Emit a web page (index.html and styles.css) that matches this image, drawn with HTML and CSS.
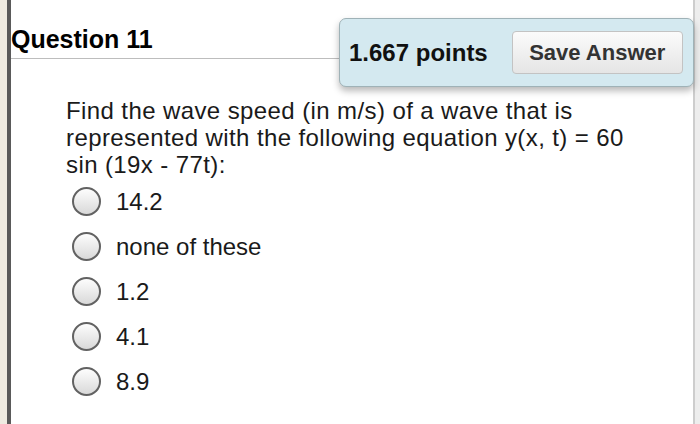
FILE: index.html
```html
<!DOCTYPE html>
<html lang="en">
<head>
  <meta charset="UTF-8">
  <meta name="viewport" content="width=device-width, initial-scale=1.0">
  <title>Question 11</title>
  <link rel="stylesheet" href="styles.css">
</head>
<body>
  <div class="gutter"></div>
  <div class="rail"></div>

  <div class="main">
    <h2 class="q-title">Question 11</h2>

    <p class="q-text">Find the wave speed (in m/s) of a wave that is represented with the following equation y(x, t) = 60 sin (19x - 77t):</p>

    <ul class="choices">
      <li class="choice"><span class="radio"></span>14.2</li>
      <li class="choice"><span class="radio"></span>none of these</li>
      <li class="choice"><span class="radio"></span>1.2</li>
      <li class="choice"><span class="radio"></span>4.1</li>
      <li class="choice"><span class="radio"></span>8.9</li>
    </ul>
  </div>

  <div class="edge"></div>

  <div class="points-box">
    <span class="points">1.667 points</span>
    <button class="save-btn">Save Answer</button>
  </div>
</body>
</html>
```

FILE: styles.css
```css
body {
  font-family: "Liberation Sans", Arial, sans-serif;
  margin: 0;
  height: 100vh;
  display: flex;
  position: relative;
  background: #fff;
  color: #1a1a1a;
  overflow: hidden;
}
.gutter {
  width: 7px;
  background: #efebe1;
}
.rail {
  width: 4px;
  background: #5a5a5a;
}
.main {
  flex: 1;
  border-right: 2px solid #cdcdcd;
}
.edge {
  width: 5px;
  background: #ededed;
}
.q-title {
  margin: 24px 0 0;
  padding-bottom: 4px;
  font-size: 25px;
  line-height: 30px;
  font-weight: bold;
  color: #000;
  border-bottom: 1px solid #bdbdbd;
}
.q-text {
  margin: 38px 60px 0 55px;
  font-size: 24px;
  line-height: 27px;
  letter-spacing: 0.4px;
}
.choices {
  list-style: none;
  margin: 1px 0 0;
  padding: 0 0 0 61px;
}
.choice {
  height: 45px;
  display: flex;
  align-items: center;
  gap: 15px;
  font-size: 24px;
}
.radio {
  width: 25px;
  height: 25px;
  border: 2px solid #626262;
  border-radius: 50%;
  background: linear-gradient(#fdfdfd, #d9d9d9);
}
.points-box {
  position: absolute;
  left: 339px;
  top: 18px;
  width: 353px;
  height: 67px;
  display: flex;
  align-items: center;
  gap: 24px;
  padding-left: 9px;
  box-sizing: border-box;
  width: 355px;
  height: 69px;
  background: #d4e9f0;
  border: 1px solid #9fb2b7;
  border-radius: 7px;
  box-shadow: 0 4px 7px rgba(0, 0, 0, 0.28);
}
.points {
  font-size: 24px;
  font-weight: bold;
  color: #111;
}
.save-btn {
  width: 171px;
  height: 43px;
  padding: 0;
  font-family: inherit;
  font-size: 22px;
  font-weight: bold;
  color: #333;
  background: linear-gradient(#fbfbfb, #e5e5e5);
  border: 1px solid #c3c3c3;
  border-radius: 4px;
}
```
